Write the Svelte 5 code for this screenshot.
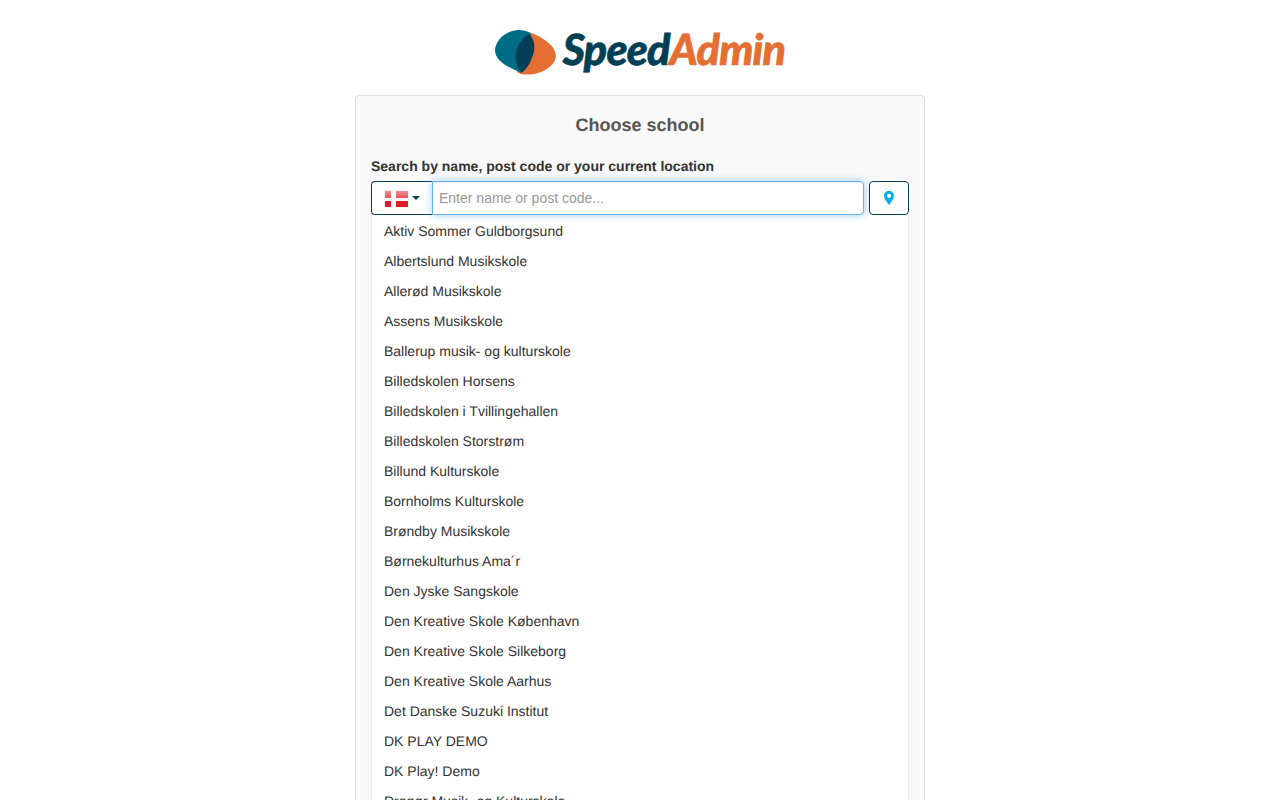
<script>
  const schools = ["Aktiv Sommer Guldborgsund","Albertslund Musikskole","Allerød Musikskole","Assens Musikskole","Ballerup musik- og kulturskole","Billedskolen Horsens","Billedskolen i Tvillingehallen","Billedskolen Storstrøm","Billund Kulturskole","Bornholms Kulturskole","Brøndby Musikskole","Børnekulturhus Ama´r","Den Jyske Sangskole","Den Kreative Skole København","Den Kreative Skole Silkeborg","Den Kreative Skole Aarhus","Det Danske Suzuki Institut","DK PLAY DEMO","DK Play! Demo","Dragør Musik- og Kulturskole"];
</script>

<div class="page">
  <header class="logo">
    <svg class="mark" width="62" height="47" viewBox="0 0 62 47" aria-hidden="true">
      <path d="M33 3C47 7 61 17 61 27C60 38 45 46 32 45.500C28 45.500 24 45 22 43Z" fill="#e56f33"/>
      <path d="M0 21C1 9 13 1 24 1C29 1 33 2 36 5L27 44C15 39 0 33 0 21Z" fill="#016d85"/>
      <path d="M34 5C39 10 40 16 39 22C37 31 33 39 27 43.500C23 41 20 33 21 24C22 16 27 9 34 5Z" fill="#033f55"/>
    </svg>
    <span class="word"><span class="speed">Speed</span><span class="admin">Admin</span></span>
  </header>

  <main class="card">
    <h1>Choose school</h1>
    <label for="q">Search by name, post code or your current location</label>
    <div class="controls">
      <button class="country" type="button" aria-label="Denmark">
        <span class="flag"></span><span class="caret"></span>
      </button>
      <input id="q" type="text" placeholder="Enter name or post code..." />
      <button class="locate" type="button" aria-label="Use current location">
        <svg width="12" height="16" viewBox="0 0 12 16"><path fill-rule="evenodd" d="M6 1C3 1 1 3.100 1 5.800C1 9 4 12.200 6 15C8 12.200 11 9 11 5.800C11 3.100 9 1 6 1ZM6 3.700A2.100 2.100 0 1 1 6 7.900A2.100 2.100 0 1 1 6 3.700Z" fill="#00aeef"/></svg>
      </button>
    </div>
    <ul>
      {#each schools as s}
        <li>{s}</li>
      {/each}
    </ul>
  </main>
</div>

<style>
  :global(body) {
    margin: 0;
    background: #fff;
    color: #333;
    font-family: "Liberation Sans", Arial, sans-serif;
    font-size: 14px;
    line-height: 20px;
    text-rendering: geometricPrecision;
  }
  .page {
    width: 570px;
    margin: 0 auto;
  }
  .logo {
    height: 95px;
    display: flex;
    align-items: flex-start;
    justify-content: center;
    gap: 6px;
    box-sizing: border-box;
  }
  .mark {
    margin-top: 29px;
    flex: none;
  }
  .word {
    font-family: Lato, sans-serif;
    font-weight: 900;
    font-style: italic;
    font-size: 43px;
    line-height: 46px;
    letter-spacing: -0.8px;
    margin-top: 27px;
    white-space: nowrap;
    -webkit-text-stroke: 0.7px currentColor;
  }
  .speed { color: #033f55; }
  .admin { color: #e56f33; }
  .card {
    background: #f9f9f9;
    border: 1px solid #ddd;
    border-radius: 4px;
    padding: 15px;
  }
  h1 {
    margin: 0 0 17px;
    font-size: 18px;
    line-height: 28px;
    font-weight: 700;
    color: #555;
    text-align: center;
  }
  label {
    display: block;
    font-weight: 700;
    margin-bottom: 5px;
  }
  .controls {
    display: flex;
    height: 34px;
  }
  .country, .locate {
    box-sizing: border-box;
    height: 34px;
    background: #fff;
    border: 1px solid #033f55;
    padding: 0;
    display: flex;
    align-items: center;
    justify-content: center;
  }
  .country {
    width: 61px;
    border-radius: 4px 0 0 4px;
    border-right: 0;
    justify-content: flex-start;
    padding-left: 13px;
    gap: 4px;
  }
  .flag {
    width: 23px;
    height: 16px;
    margin-top: 1px;
    box-shadow: 0 0 1px rgba(0,0,0,.3);
    background:
      linear-gradient(to bottom, transparent 7px, #fff 7px, #fff 10px, transparent 10px),
      linear-gradient(to right, transparent 6px, #fff 6px, #fff 11px, transparent 11px),
      linear-gradient(to bottom, #f08c90 0, #e9545c 7px, #e01c26 8px, #e01c26 100%);
  }
  .caret {
    width: 0;
    height: 0;
    border-top: 4px solid #033f55;
    border-left: 4px solid transparent;
    border-right: 4px solid transparent;
  }
  input {
    box-sizing: border-box;
    flex: 1;
    min-width: 0;
    height: 34px;
    padding: 6px;
    border: 1px solid #66afe9;
    border-radius: 0 4px 4px 0;
    outline: 0;
    font: inherit;
    color: #555;
    background: #fff;
    box-shadow: inset 0 1px 1px rgba(0,0,0,.075), 0 0 8px rgba(102,175,233,.6);
  }
  input::placeholder {
    color: #999;
    opacity: 1;
  }
  .locate {
    width: 40px;
    margin-left: 5px;
    border-radius: 4px;
  }
  ul {
    list-style: none;
    margin: 0;
    padding: 1px 0 0;
    background: #fff;
    border: 1px solid #eee;
    border-top: 0;
  }
  li {
    height: 30px;
    padding: 0 12px;
    line-height: 30px;
  }
</style>
